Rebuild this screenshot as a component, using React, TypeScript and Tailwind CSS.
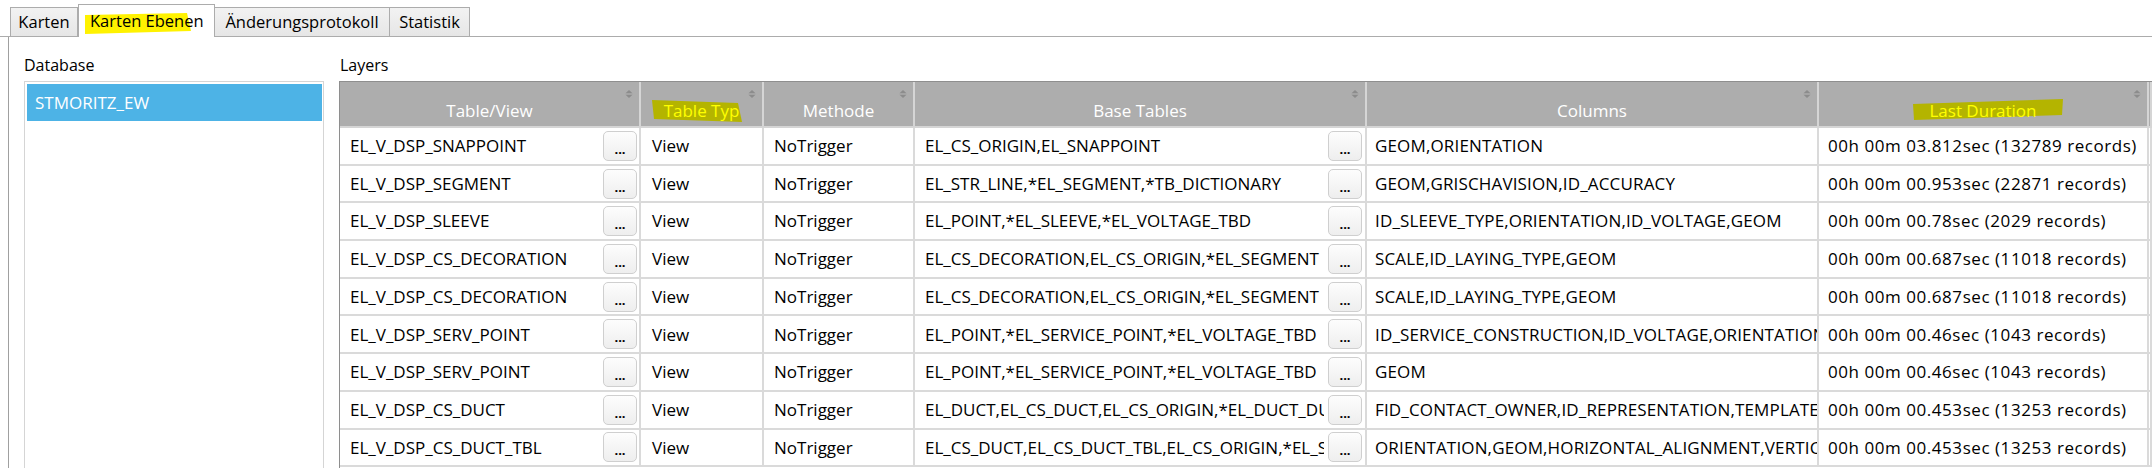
import React from 'react'

const rows = [
  { name: 'EL_V_DSP_SNAPPOINT', type: 'View', method: 'NoTrigger', base: 'EL_CS_ORIGIN,EL_SNAPPOINT', cols: 'GEOM,ORIENTATION', dur: '00h 00m 03.812sec (132789 records)' },
  { name: 'EL_V_DSP_SEGMENT', type: 'View', method: 'NoTrigger', base: 'EL_STR_LINE,*EL_SEGMENT,*TB_DICTIONARY', cols: 'GEOM,GRISCHAVISION,ID_ACCURACY', dur: '00h 00m 00.953sec (22871 records)' },
  { name: 'EL_V_DSP_SLEEVE', type: 'View', method: 'NoTrigger', base: 'EL_POINT,*EL_SLEEVE,*EL_VOLTAGE_TBD', cols: 'ID_SLEEVE_TYPE,ORIENTATION,ID_VOLTAGE,GEOM', dur: '00h 00m 00.78sec (2029 records)' },
  { name: 'EL_V_DSP_CS_DECORATION', type: 'View', method: 'NoTrigger', base: 'EL_CS_DECORATION,EL_CS_ORIGIN,*EL_SEGMENT', cols: 'SCALE,ID_LAYING_TYPE,GEOM', dur: '00h 00m 00.687sec (11018 records)' },
  { name: 'EL_V_DSP_CS_DECORATION', type: 'View', method: 'NoTrigger', base: 'EL_CS_DECORATION,EL_CS_ORIGIN,*EL_SEGMENT', cols: 'SCALE,ID_LAYING_TYPE,GEOM', dur: '00h 00m 00.687sec (11018 records)' },
  { name: 'EL_V_DSP_SERV_POINT', type: 'View', method: 'NoTrigger', base: 'EL_POINT,*EL_SERVICE_POINT,*EL_VOLTAGE_TBD', cols: 'ID_SERVICE_CONSTRUCTION,ID_VOLTAGE,ORIENTATION,GEOM', dur: '00h 00m 00.46sec (1043 records)' },
  { name: 'EL_V_DSP_SERV_POINT', type: 'View', method: 'NoTrigger', base: 'EL_POINT,*EL_SERVICE_POINT,*EL_VOLTAGE_TBD', cols: 'GEOM', dur: '00h 00m 00.46sec (1043 records)' },
  { name: 'EL_V_DSP_CS_DUCT', type: 'View', method: 'NoTrigger', base: 'EL_DUCT,EL_CS_DUCT,EL_CS_ORIGIN,*EL_DUCT_DUCT_TBL', cols: 'FID_CONTACT_OWNER,ID_REPRESENTATION,TEMPLATE_ID', dur: '00h 00m 00.453sec (13253 records)' },
  { name: 'EL_V_DSP_CS_DUCT_TBL', type: 'View', method: 'NoTrigger', base: 'EL_CS_DUCT,EL_CS_DUCT_TBL,EL_CS_ORIGIN,*EL_SEGMENT', cols: 'ORIENTATION,GEOM,HORIZONTAL_ALIGNMENT,VERTICAL_ALIGNMENT', dur: '00h 00m 00.453sec (13253 records)' },
]

function SortIcon() {
  return (
    <svg width="8" height="8" viewBox="0 0 8 8" className="absolute right-[6px] top-[8px]">
      <path d="M4 0 L7.5 3.3 H0.5 Z" fill="#8c8c8c" />
      <path d="M4 8 L7.5 4.7 H0.5 Z" fill="#8c8c8c" />
    </svg>
  )
}

function DotsButton() {
  return (
    <div className="shrink-0 w-[34px] h-[30px] rounded-[5px] border border-[#cfcfcf] bg-linear-to-b from-[#fdfdfd] to-[#eeeeee] flex items-end justify-center pb-[4px] text-[13px] leading-none font-bold text-black">
      ...
    </div>
  )
}

function Marker({ points, color, w, h, className }: { points: string; color: string; w: number; h: number; className: string }) {
  return (
    <svg width={w} height={h} viewBox={`0 0 ${w} ${h}`} className={`absolute ${className}`}>
      <polygon points={points} fill={color} />
    </svg>
  )
}

const App: React.FC = () => {
  const cell = 'h-full border-r-2 border-[#dadada] flex items-center overflow-hidden whitespace-nowrap shrink-0'
  const head = 'relative h-full border-r-2 border-[#d5d5d5] flex items-center justify-center pt-[13px] shrink-0'

  return (
    <div className="w-[2152px] h-[468px] overflow-hidden bg-white text-black font-['Open_Sans',sans-serif]">
      {/* Tabs */}
      <div className="h-[37px] border-b border-[#acacac] flex items-end pl-[10px] text-[16.5px]">
        <div className="w-[68px] h-[29px] border border-b-0 border-[#acacac] bg-linear-to-b from-[#f2f2f2] to-[#e6e6e6] flex items-center justify-center">
          Karten
        </div>
        <div className="relative z-10 -mb-px w-[137px] h-[33px] border border-b-0 border-[#acacac] bg-white flex items-center pl-[11px]">
          <Marker w={106} h={22} color="#fff200" points="0,2 102,0 106,18 0,21" className="left-[6px] top-[8px]" />
          <span className="relative">Karten Ebenen</span>
        </div>
        <div className="w-[175px] h-[29px] border border-l-0 border-b-0 border-[#acacac] bg-linear-to-b from-[#f2f2f2] to-[#e6e6e6] flex items-center justify-center">
          Änderungsprotokoll
        </div>
        <div className="w-[80px] h-[29px] border border-l-0 border-b-0 border-[#acacac] bg-linear-to-b from-[#f2f2f2] to-[#e6e6e6] flex items-center justify-center">
          Statistik
        </div>
      </div>

      {/* Panel */}
      <div className="ml-[8px] h-[431px] border-l border-[#a0a0a0] flex pt-[18px]">
        {/* Database */}
        <div className="ml-[15px] w-[300px] shrink-0 flex flex-col">
          <div className="h-[20px] leading-[20px] text-[16px] mb-[6px]">Database</div>
          <div className="flex-1 border border-b-0 border-[#d5d5d5] pt-[2px] pl-[2px] pr-[1px]">
            <div className="h-[37px] bg-[#4db3e6] text-white text-[17px] flex items-center pl-[8px]">STMORITZ_EW</div>
          </div>
        </div>

        {/* Layers */}
        <div className="ml-[15px] flex-1 flex flex-col min-w-0">
          <div className="h-[20px] leading-[20px] text-[16px] mb-[6px] pl-[1px]">Layers</div>
          <div className="flex-1 border-l border-[#8e8e8e] overflow-hidden">
            {/* Header */}
            <div className="h-[47px] border-t border-[#8e8e8e] border-b-2 border-b-[#d5d5d5] bg-[#adadad] flex text-white text-[17px]">
              <div className={`${head} w-[301px]`}>Table/View<SortIcon /></div>
              <div className={`${head} w-[123px]`}>
                <Marker w={90} h={24} color="#b4b400" points="0,0 86,3 90,22 2,19" className="left-[11px] top-[18px]" />
                <span className="relative text-[#ffff00]">Table Typ</span>
                <SortIcon />
              </div>
              <div className={`${head} w-[151px]`}>Methode<SortIcon /></div>
              <div className={`${head} w-[452px]`}>Base Tables<SortIcon /></div>
              <div className={`${head} w-[452px]`}>Columns<SortIcon /></div>
              <div className={`${head} w-[330px]`}>
                <Marker w={150} h={22} color="#b4b400" points="0,5 150,0 149,16 1,21" className="left-[94px] top-[17px]" />
                <span className="relative text-[#ffff00]">Last Duration</span>
                <SortIcon />
              </div>
              <div className={`${head} flex-1 border-r-0`}></div>
            </div>

            {/* Rows */}
            {rows.map((r, i) => (
              <div key={i} className="h-[37.7px] border-b-2 border-[#dadada] flex text-[17px]">
                <div className={`${cell} w-[301px] pl-[10px] pr-[2px]`}>
                  <span className="flex-1 overflow-hidden">{r.name}</span>
                  <DotsButton />
                </div>
                <div className={`${cell} w-[123px] pl-[11px]`}>{r.type}</div>
                <div className={`${cell} w-[151px] pl-[10px]`}>{r.method}</div>
                <div className={`${cell} w-[452px] pl-[10px] pr-[3px]`}>
                  <span className="flex-1 overflow-hidden mr-[4px]">{r.base}</span>
                  <DotsButton />
                </div>
                <div className={`${cell} w-[452px] pl-[8px] tracking-[0.15px]`}>{r.cols}</div>
                <div className={`${cell} w-[330px] pl-[9px] tracking-[0.55px]`}>{r.dur}</div>
                <div className={`${cell} flex-1 border-r-0`}></div>
              </div>
            ))}
          </div>
        </div>
      </div>
    </div>
  )
}

export default App
